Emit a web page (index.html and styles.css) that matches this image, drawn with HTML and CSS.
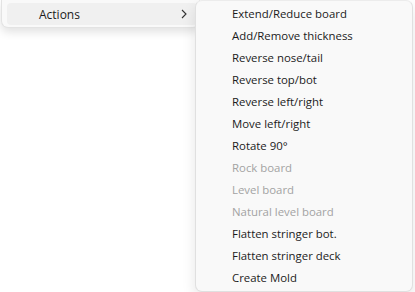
FILE: index.html
```html
<!DOCTYPE html>
<html lang="en">
  <head>
    <meta charset="UTF-8" />
    <title>Menu</title>
    <link rel="stylesheet" href="styles.css">
  </head>
  <body>
    <div class="menus">
      <div class="main-menu">
        <div class="menu-item active">
          <span>Actions</span>
          <svg class="chevron" width="8" height="10" viewBox="0 0 8 10">
            <path d="M2 1 L6 5 L2 9" fill="none" stroke="#333" stroke-width="1.1" />
          </svg>
        </div>
      </div>

      <ul class="sub-menu">
        <li>Extend/Reduce board</li>
        <li>Add/Remove thickness</li>
        <li>Reverse nose/tail</li>
        <li>Reverse top/bot</li>
        <li>Reverse left/right</li>
        <li>Move left/right</li>
        <li>Rotate 90°</li>
        <li class="disabled">Rock board</li>
        <li class="disabled">Level board</li>
        <li class="disabled">Natural level board</li>
        <li>Flatten stringer bot.</li>
        <li>Flatten stringer deck</li>
        <li>Create Mold</li>
      </ul>
    </div>
  </body>
</html>
```

FILE: styles.css
```css
/* General */
body {
  margin: 0;
  background: #ffffff;
  font-family: "Open Sans", "Noto Sans", sans-serif;
  font-size: 11.4px;
  color: #1b1b1b;
}

.menus {
  display: flex;
  align-items: flex-start;
}

/* Parent menu */
.main-menu {
  width: 190px;
  margin-left: 1px;
  padding: 3px 2px 2px 5px;
  background: #f9f9f9;
  border: 1px solid #e3e3e3;
  border-top: none;
  border-radius: 0 0 7px 7px;
  box-shadow: 0 4px 10px rgba(0, 0, 0, 0.12);
}

.menu-item {
  display: flex;
  align-items: center;
  justify-content: space-between;
  height: 22px;
  padding: 0 9px 0 32px;
  font-size: 12px;
  border-radius: 4px;
}

.menu-item.active {
  background: #f0f0f0;
}

/* Submenu */
.sub-menu {
  list-style: none;
  margin: 0 0 0 -5px;
  width: 216px;
  padding: 2px 0 2px;
  background: #f9f9f9;
  border: 1px solid #e0e0e0;
  border-top-color: #ececec;
  border-radius: 7px;
  box-shadow: 0 6px 14px rgba(0, 0, 0, 0.1);
}

.sub-menu li {
  height: 22px;
  line-height: 22px;
  padding-left: 36px;
}

.sub-menu li.disabled {
  color: #a3a3a3;
}
```
